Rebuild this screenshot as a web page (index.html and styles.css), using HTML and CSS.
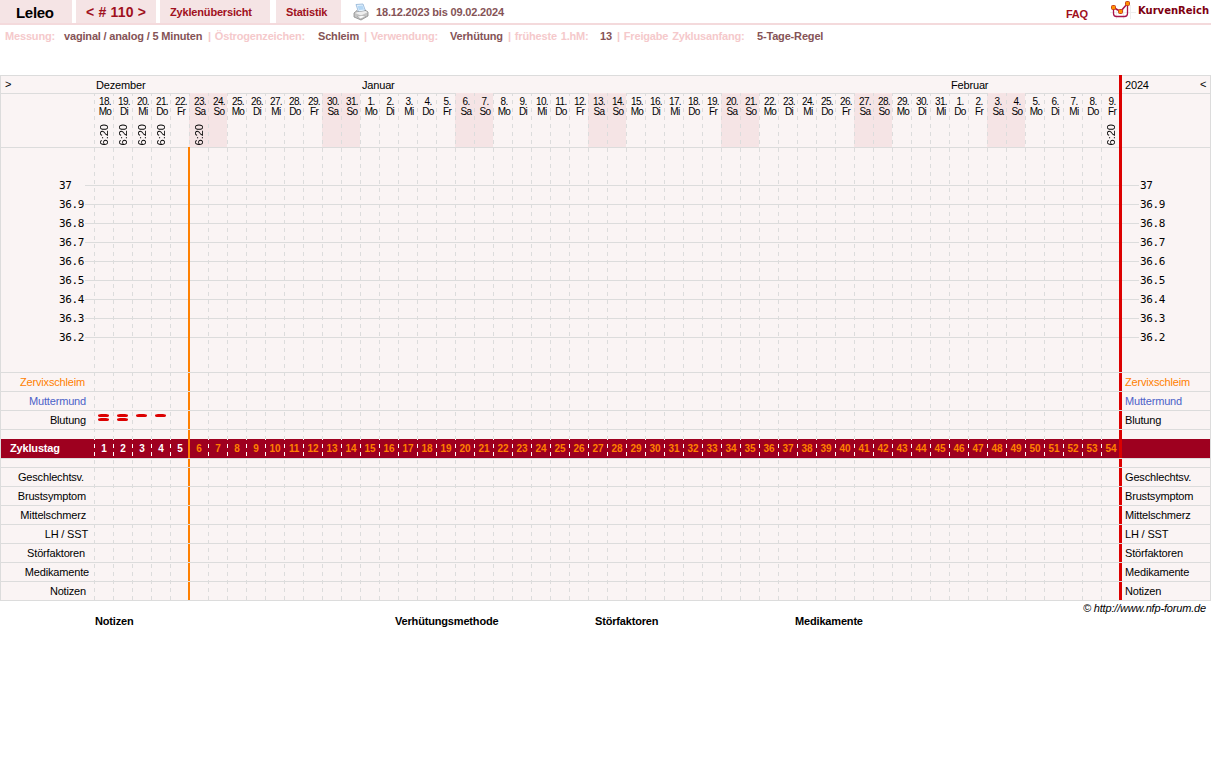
FILE: index.html
```html
<!DOCTYPE html>
<html lang="de">
<head>
    <meta charset="UTF-8">
    <title>KurvenReich - Zyklus 110</title>
    <link rel="stylesheet" href="styles.css">
</head>
<body>

    <div class="topbar">
        <div class="tab tab-user">Leleo</div>
        <div class="tab tab-cycle">&lt; # 110 &gt;</div>
        <div class="tab tab-overview">Zyklenübersicht</div>
        <div class="tab tab-stats">Statistik</div>
        <svg class="printer" width="16" height="18" viewBox="0 0 16 18">
            <path d="M3 1.5 L10 1 L12.5 8 L5.5 9 Z" fill="#e4f1fc" stroke="#8fb3d6" stroke-width=".8"/>
            <path d="M4.5 3 L9.5 2.5 L11 6.5 L6 7 Z" fill="#b5d8f5"/>
            <path d="M1 10 L4 7.5 L5.5 9 L12.5 8 L12 7 L15 9 V13 L8 17 L1 14 Z" fill="#c4c4c4" stroke="#8c8c8c" stroke-width=".8"/>
            <path d="M2 10 L8 12.5 L14.5 9.3 L12.5 8 L5 9 Z" fill="#eeeeee"/>
            <path d="M4 13.5 L9 12.3 L13 13.6 L7.5 15.8 Z" fill="#fafafa" stroke="#999" stroke-width=".5"/>
        </svg>
        <span class="range">18.12.2023 bis 09.02.2024</span>
        <span class="faq">FAQ</span>
        <svg class="logo" width="26" height="20" viewBox="0 0 26 20">
            <path d="M0 12.5 H26 M6.5 8 V19 M13.5 8 V19 M20.5 5 V19" stroke="#eeeeee" fill="none"/>
            <path d="M3.5 8 V13.5 Q3.5 16.5 6.5 16.5 H14.5 Q17.5 16.5 17.5 13.5 V5" stroke="#a8134a" stroke-width="1.3" fill="none"/>
            <path d="M3.5 7.5 L10.5 11.5 L17.5 3.5" stroke="#a8134a" stroke-width="1.5" fill="none"/>
            <g fill="#ff9100" stroke="#c8401c">
                <rect x="1.5" y="5.5" width="4" height="4" rx="1"/>
                <rect x="8.5" y="9.5" width="4" height="4" rx="1"/>
                <rect x="15.5" y="1.5" width="4" height="4" rx="1"/>
            </g>
        </svg>
        <span class="brand">KurvenReich</span>
    </div>

    <div class="settings">
        <span class="key k1">Messung:</span><span class="val v1">vaginal / analog / 5 Minuten</span>
        <span class="key k2">| Östrogenzeichen:</span><span class="val v2">Schleim</span>
        <span class="key k3">| Verwendung:</span><span class="val v3">Verhütung</span>
        <span class="key k4">| früheste 1.hM:</span><span class="val v4">13</span>
        <span class="key k5">| Freigabe Zyklusanfang:</span><span class="val v5">5-Tage-Regel</span>
    </div>

    <div class="chart">
        <div class="months">
            <span class="prev">&gt;</span>
            <span class="month dec">Dezember</span>
            <span class="month jan">Januar</span>
            <span class="month feb">Februar</span>
            <span class="year">2024</span>
            <span class="next">&lt;</span>
        </div>
        <div class="days" id="days"></div>
        <div class="temps" id="temps"></div>
        <div class="row"><span class="label zervix">Zervixschleim</span><span class="label-right zervix">Zervixschleim</span></div>
        <div class="row"><span class="label mumu">Muttermund</span><span class="label-right mumu">Muttermund</span></div>
        <div class="row">
            <span class="label">Blutung</span>
            <span class="blood"><i></i><i></i></span>
            <span class="blood"><i></i><i></i></span>
            <span class="blood"><i></i></span>
            <span class="blood"><i></i></span>
            <span class="label-right">Blutung</span>
        </div>
        <div class="row gap-top"></div>
        <div class="cycle" id="cycle"><span class="cycle-title">Zyklustag</span></div>
        <div class="row gap-bottom"></div>
        <div class="row"><span class="label l-gv">Geschlechtsv.</span><span class="label-right">Geschlechtsv.</span></div>
        <div class="row"><span class="label">Brustsymptom</span><span class="label-right">Brustsymptom</span></div>
        <div class="row"><span class="label">Mittelschmerz</span><span class="label-right">Mittelschmerz</span></div>
        <div class="row"><span class="label l-lh">LH / SST</span><span class="label-right">LH / SST</span></div>
        <div class="row"><span class="label l-st">Störfaktoren</span><span class="label-right">Störfaktoren</span></div>
        <div class="row"><span class="label l-med">Medikamente</span><span class="label-right">Medikamente</span></div>
        <div class="row"><span class="label">Notizen</span><span class="label-right">Notizen</span></div>
        <div class="marker fertile"></div>
        <div class="marker cycle-end"></div>
    </div>

    <div class="copyright">© http://www.nfp-forum.de</div>

    <div class="notes">
        <span class="n1">Notizen</span>
        <span class="n2">Verhütungsmethode</span>
        <span class="n3">Störfaktoren</span>
        <span class="n4">Medikamente</span>
    </div>

    <script src="chart.js"></script>
</body>
</html>
```
FILE: styles.css
```css
body {
    margin: 0;
    background: #fff;
    font-family: Arial, "Liberation Sans", sans-serif;
    font-size: 11px;
    letter-spacing: -0.17px;
    color: #000;
}

/* Top navigation */
.topbar {
    display: flex;
    height: 23px;
    border-bottom: 2px solid #f4dadc;
    font-weight: bold;
    line-height: 25px;
    color: #a01020;
    white-space: nowrap;
}

.tab {
    background: #f5e4e5;
    box-sizing: border-box;
    padding-left: 10px;
}

.tab-user {
    width: 72px;
    margin-right: 4px;
    padding-left: 16px;
    font-size: 15px;
    letter-spacing: -0.3px;
    color: #000;
}

.tab-cycle {
    width: 80px;
    margin-right: 4px;
    font-size: 14px;
    letter-spacing: 0.2px;
}

.tab-overview {
    width: 110px;
    margin-right: 6px;
}

.tab-stats {
    width: 65px;
}

.printer {
    margin: 3px 7px 0 12px;
}

.range {
    color: #855356;
}

.faq {
    margin-left: auto;
    margin-right: 22px;
    line-height: 28px;
}

.logo {
    margin-right: 2px;
}

.brand {
    width: 73px;
    font-family: Verdana, "DejaVu Sans", sans-serif;
    font-size: 10px;
    line-height: 22px;
    letter-spacing: 0;
    color: #7d0010;
}

/* Settings line */
.settings {
    display: flex;
    height: 50px;
    padding-left: 5px;
    line-height: 23px;
    font-weight: bold;
    white-space: nowrap;
}

.key { color: #f5c9cb; word-spacing: 1px; }
.val { color: #855356; }
.k1 { width: 59px; }
.v1 { width: 143px; }
.k2 { width: 111px; }
.v2 { width: 45px; }
.k3 { width: 87px; }
.v3 { width: 58px; }
.k4 { width: 92px; }
.v4 { width: 16px; }
.k5 { width: 141px; }
.k2, .k3, .k5 { text-indent: 1px; }

/* Chart */
.chart {
    position: relative;
    isolation: isolate;
    box-sizing: border-box;
    width: 1211px;
    height: 526px;
    background: #faf4f4;
    border: 1px solid #dcdcdc;
    border-top: 0;
}

/* dashed day separators */
.chart::before {
    content: "";
    position: absolute;
    left: 93px;
    top: 18px;
    width: 1025px;
    bottom: 0;
    background: linear-gradient(#dcdcdc 50%, transparent 50%) 0 -1px / 19px 8px;
    -webkit-mask: repeating-linear-gradient(90deg, #000 0 1px, transparent 1px 19px);
    mask: repeating-linear-gradient(90deg, #000 0 1px, transparent 1px 19px);
}

.months {
    display: flex;
    box-sizing: border-box;
    height: 18px;
    border-top: 1px solid #dcdcdc;
    line-height: 19px;
}

.prev { width: 91px; padding-left: 4px; line-height: 16px; }
.dec { width: 266px; }
.jan { width: 589px; }
.feb { width: 174px; }
.year { width: 75px; }
.next { line-height: 16px; }

.days {
    position: relative;
    z-index: -1;
    display: grid;
    grid-template-columns: repeat(54, 19px);
    box-sizing: border-box;
    height: 54px;
    padding-left: 93px;
    border-top: 1px solid #dcdcdc;
}

.day {
    position: relative;
    padding-top: 3px;
    font-size: 10px;
    line-height: 10px;
    text-align: center;
    letter-spacing: -0.6px;
    padding-left: 3px;
}

.weekend {
    background: #f5e4e5;
    margin-top: -1px;
    padding-top: 4px;
}

.time {
    position: absolute;
    left: 4px;
    bottom: 2px;
    writing-mode: vertical-rl;
    transform: rotate(180deg);
    font-size: 11px;
    line-height: 13px;
    letter-spacing: 0;
}

.temps {
    position: relative;
    z-index: -1;
    box-sizing: border-box;
    height: 225px;
    padding-top: 28px;
    border-top: 1px solid #dcdcdc;
}

.temp {
    display: grid;
    grid-template-columns: 26px 1054px 40px;
    align-items: center;
    height: 19px;
    padding-left: 58px;
    font-family: "DejaVu Sans Mono", monospace;
    font-size: 11px;
    letter-spacing: -0.4px;
}

.temp span:last-child {
    padding-left: 1px;
}

.temp hr {
    width: 100%;
    height: 1px;
    margin: 0;
    border: 0;
    background: #dcdcdc;
}

.row {
    position: relative;
    z-index: 3;
    display: flex;
    box-sizing: border-box;
    height: 19px;
    border-top: 1px solid #dcdcdc;
    line-height: 19px;
    white-space: nowrap;
}

.label {
    box-sizing: border-box;
    width: 93px;
    padding-right: 8px;
    text-align: right;
}

.label-right {
    width: 86px;
    margin-left: auto;
    margin-right: -1px;
}

.zervix { color: #ff8000; }
.mumu { color: #4c62c8; }
.label.zervix { padding-right: 9px; }
.l-gv { padding-right: 10px; }
.l-lh { padding-right: 6px; }
.l-st { padding-right: 9px; }
.l-med { padding-right: 5px; }

.blood {
    width: 15px;
    padding: 3px 0 0 4px;
}

.blood i {
    display: block;
    width: 11px;
    height: 3px;
    margin-bottom: 1px;
    border-radius: 3px / 1.5px;
    background: #dc0000;
}

.gap-top { height: 10px; }
.gap-bottom { height: 9px; }

/* Cycle day band */
.cycle {
    position: relative;
    z-index: 1;
    display: grid;
    grid-template-columns: 93px repeat(54, 19px);
    height: 19px;
    background: #9e001f;
    line-height: 19px;
    font-weight: bold;
    color: #fff;
}

.cycle-title {
    padding-left: 9px;
}

.cycle-day {
    padding-left: 1px;
    font-size: 10px;
    text-align: center;
    background: linear-gradient(#fff 50%, transparent 50%) 0 -3px / 1px 8px repeat-y;
}

.late {
    color: #ff8000;
}

.marker {
    position: absolute;
    z-index: 2;
    bottom: 0;
}

.fertile {
    left: 187px;
    top: 72px;
    width: 2px;
    background: #ff8000;
}

.cycle-end {
    left: 1118px;
    top: 0;
    width: 3px;
    background: #dc0000;
}

.copyright {
    height: 14px;
    padding-right: 5px;
    line-height: 15px;
    text-align: right;
    font-style: italic;
}

.notes {
    display: flex;
    padding-left: 95px;
    font-weight: bold;
    line-height: 13px;
}

.n1 { width: 300px; }
.n2, .n3 { width: 200px; }
```
FILE: chart.js
```js
var names = ["Mo", "Di", "Mi", "Do", "Fr", "Sa", "So"];
var times = [0, 1, 2, 3, 5, 53];
var days = document.getElementById("days");
var cycle = document.getElementById("cycle");
var temps = document.getElementById("temps");

for (let i = 0; i < 54; i++) {
    let date = new Date(2023, 11, 18 + i);

    let day = document.createElement("div");
    day.className = i % 7 > 4 ? "day weekend" : "day";
    day.innerHTML = date.getDate() + ".<br>" + names[i % 7];
    if (times.includes(i)) {
        day.innerHTML += '<span class="time">6:20</span>';
    }
    days.appendChild(day);

    let nr = document.createElement("span");
    nr.className = i > 4 ? "cycle-day late" : "cycle-day";
    nr.textContent = i + 1;
    cycle.appendChild(nr);
}

["37", "36.9", "36.8", "36.7", "36.6", "36.5", "36.4", "36.3", "36.2"].forEach(function (t) {
    temps.innerHTML += '<div class="temp"><span>' + t + '</span><hr><span>' + t + '</span></div>';
});
```
